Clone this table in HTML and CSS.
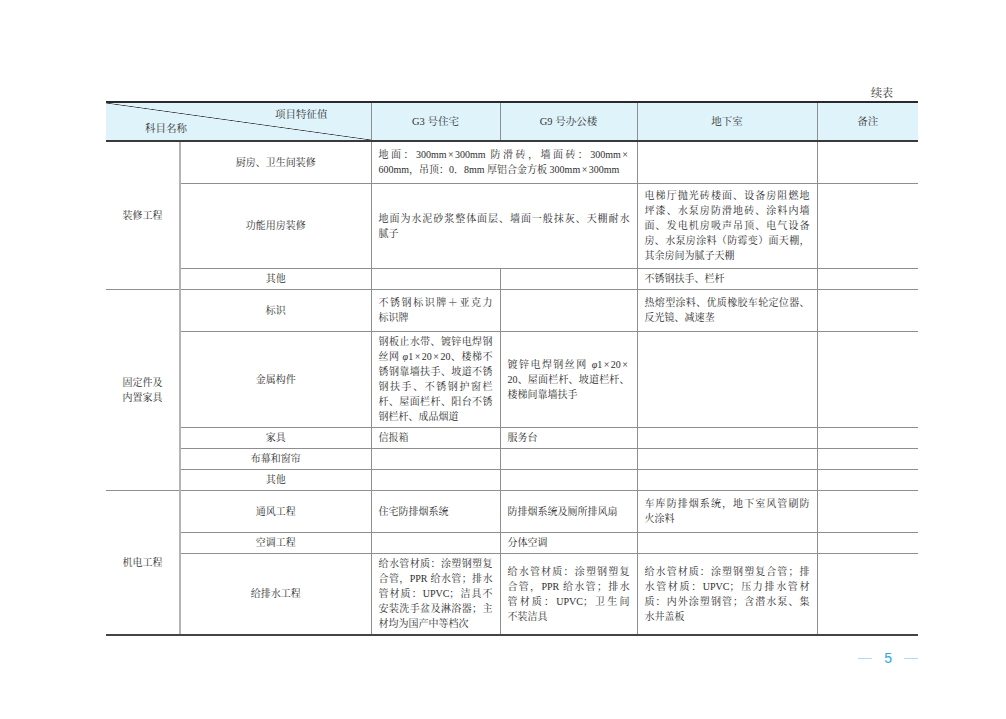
FILE: index.html
```html
<!DOCTYPE html>
<html lang="zh-CN">
<head>
<meta charset="utf-8">
<title>续表</title>
<link rel="stylesheet" href="styles.css">
</head>
<body>
<div class="page">
  <div class="caption">续表</div>
  <table class="sheet">
    <colgroup>
      <col class="w1"><col class="w2"><col class="w3"><col class="w4"><col class="w5"><col class="w6">
    </colgroup>
    <thead>
      <tr class="h-head">
        <th colspan="2" class="diag c1">
          <div class="diag-box">
            <span class="diag-top">项目特征值</span>
            <span class="diag-bottom">科目名称</span>
          </div>
        </th>
        <th>G3 号住宅</th>
        <th>G9 号办公楼</th>
        <th>地下室</th>
        <th class="c6">备注</th>
      </tr>
    </thead>
    <tbody>
      <tr class="h42">
        <td rowspan="3" class="c1 sec">装修工程</td>
        <td class="lbl">厨房、卫生间装修</td>
        <td colspan="2" class="txt"><span class="ln">地面：300mm<span class="x">×</span>300mm 防滑砖，墙面砖：300mm<span class="x">×</span></span><span class="ln last">600mm，吊顶：0．8mm 厚铝合金方板 300mm<span class="x">×</span>300mm</span></td>
        <td class="txt"></td>
        <td class="c6"></td>
      </tr>
      <tr class="h85">
        <td class="lbl">功能用房装修</td>
        <td colspan="2" class="txt"><span class="ln">地面为水泥砂浆整体面层、墙面一般抹灰、天棚耐水</span><span class="ln last">腻子</span></td>
        <td class="txt"><span class="ln">电梯厅抛光砖楼面、设备房阻燃地</span><span class="ln">坪漆、水泵房防滑地砖、涂料内墙</span><span class="ln">面、发电机房吸声吊顶、电气设备</span><span class="ln">房、水泵房涂料（防霉变）面天棚，</span><span class="ln last">其余房间为腻子天棚</span></td>
        <td class="c6"></td>
      </tr>
      <tr class="h21">
        <td class="lbl">其他</td>
        <td class="txt"></td>
        <td class="txt"></td>
        <td class="txt">不锈钢扶手、栏杆</td>
        <td class="c6"></td>
      </tr>

      <tr class="h42">
        <td rowspan="5" class="c1 sec"><span class="ln">固定件及</span><span class="ln">内置家具</span></td>
        <td class="lbl">标识</td>
        <td class="txt"><span class="ln">不锈钢标识牌＋亚克力</span><span class="ln last">标识牌</span></td>
        <td class="txt"></td>
        <td class="txt"><span class="ln">热熔型涂料、优质橡胶车轮定位器、</span><span class="ln last">反光镜、减速垄</span></td>
        <td class="c6"></td>
      </tr>
      <tr class="h96">
        <td class="lbl">金属构件</td>
        <td class="txt"><span class="ln">钢板止水带、镀锌电焊钢</span><span class="ln">丝网 <i>φ</i>1<span class="x">×</span>20<span class="x">×</span>20、楼梯不</span><span class="ln">锈钢靠墙扶手、坡道不锈</span><span class="ln">钢扶手、不锈钢护窗栏</span><span class="ln">杆、屋面栏杆、阳台不锈</span><span class="ln last">钢栏杆、成品烟道</span></td>
        <td class="txt"><span class="ln">镀锌电焊钢丝网 <i>φ</i>1<span class="x">×</span>20<span class="x">×</span></span><span class="ln">20、屋面栏杆、坡道栏杆、</span><span class="ln last">楼梯间靠墙扶手</span></td>
        <td class="txt"></td>
        <td class="c6"></td>
      </tr>
      <tr class="h21">
        <td class="lbl">家具</td>
        <td class="txt">信报箱</td>
        <td class="txt">服务台</td>
        <td class="txt"></td>
        <td class="c6"></td>
      </tr>
      <tr class="h21">
        <td class="lbl">布幕和窗帘</td>
        <td class="txt"></td>
        <td class="txt"></td>
        <td class="txt"></td>
        <td class="c6"></td>
      </tr>
      <tr class="h21">
        <td class="lbl">其他</td>
        <td class="txt"></td>
        <td class="txt"></td>
        <td class="txt"></td>
        <td class="c6"></td>
      </tr>

      <tr class="h42">
        <td rowspan="3" class="c1 sec sec-last">机电工程</td>
        <td class="lbl">通风工程</td>
        <td class="txt">住宅防排烟系统</td>
        <td class="txt">防排烟系统及厕所排风扇</td>
        <td class="txt"><span class="ln">车库防排烟系统，地下室风管刷防</span><span class="ln last">火涂料</span></td>
        <td class="c6"></td>
      </tr>
      <tr class="h21">
        <td class="lbl">空调工程</td>
        <td class="txt"></td>
        <td class="txt">分体空调</td>
        <td class="txt"></td>
        <td class="c6"></td>
      </tr>
      <tr class="h82 last-row">
        <td class="lbl">给排水工程</td>
        <td class="txt"><span class="ln">给水管材质：涂塑钢塑复</span><span class="ln">合管，PPR 给水管；排水</span><span class="ln">管材质：UPVC；洁具不</span><span class="ln">安装洗手盆及淋浴器；主</span><span class="ln last">材均为国产中等档次</span></td>
        <td class="txt"><span class="ln">给水管材质：涂塑钢塑复</span><span class="ln">合管，PPR 给水管；排水</span><span class="ln">管材质：UPVC；卫生间</span><span class="ln last">不装洁具</span></td>
        <td class="txt"><span class="ln">给水管材质：涂塑钢塑复合管；排</span><span class="ln">水管材质：UPVC；压力排水管材</span><span class="ln">质：内外涂塑钢管；含潜水泵、集</span><span class="ln last">水井盖板</span></td>
        <td class="c6"></td>
      </tr>
    </tbody>
  </table>
  <div class="folio">
    <span class="folio-rule"></span>
    <span class="folio-num">5</span>
    <span class="folio-rule"></span>
  </div>
</div>
</body>
</html>
```
FILE: styles.css
```css
html, body {
  margin: 0;
  padding: 0;
  background: #ffffff;
}

body {
  font-family: "Liberation Serif", "Noto Serif CJK SC", "Noto Sans CJK SC", serif;
  color: #2e2e2e;
  font-size: 10px;
}

.page {
  width: 812px;
  padding: 86px 0 0 106px;
}

.caption {
  text-align: right;
  padding-right: 25px;
  font-size: 11px;
  line-height: 15px;
  height: 15px;
  color: #333;
}

.sheet {
  width: 812px;
  border-collapse: collapse;
  table-layout: fixed;
}

.w1 { width: 74px; }
.w2 { width: 191px; }
.w3 { width: 129px; }
.w4 { width: 137px; }
.w5 { width: 180px; }
.w6 { width: 101px; }

.sheet th,
.sheet td {
  border: 1px solid #8e8e8e;
  padding: 0 7px;
  vertical-align: middle;
  line-height: 15px;
  font-weight: normal;
}

.sheet th {
  background: #dff3fb;
  border-top: 2px solid #2a2a2a;
  border-bottom: 2px solid #3a3a3a;
  text-align: center;
  font-size: 10.5px;
  color: #333;
}

.h-head { height: 39px; }
.h21 { height: 21px; }
.h42 { height: 42px; }
.h82 { height: 82px; }
.h85 { height: 85px; }
.h96 { height: 96px; }

.sheet .c1 { border-left: none; }
.sheet .c6 { border-right: none; }

.sheet td.sec {
  text-align: center;
  border-right: 2px solid #b4b4b4;
  padding: 0 4px;
}

.sheet td.lbl {
  text-align: center;
}

.sheet td.txt {
  text-align: left;
}

.ln {
  display: block;
  text-align: justify;
  text-align-last: justify;
}

.ln.last {
  text-align: left;
  text-align-last: auto;
}

.sec .ln {
  text-align: center;
  text-align-last: center;
}

.x {
  padding: 0 1.5px;
}

.sheet .last-row td,
.sheet td.sec-last {
  border-bottom: 2px solid #444;
}

.sheet th.diag {
  padding: 0;
  background:
    linear-gradient(to top right, transparent calc(50% - 0.7px), #3a3a3a 50%, transparent calc(50% + 0.7px)),
    #dff3fb;
}

.diag-box {
  display: flex;
  flex-direction: column;
  height: 37px;
  justify-content: center;
  line-height: 14px;
}

.diag-top {
  align-self: flex-end;
  margin-right: 43px;
}

.diag-bottom {
  align-self: flex-start;
  margin-left: 39px;
}

i {
  font-style: italic;
}

.folio {
  display: flex;
  justify-content: flex-end;
  align-items: center;
  gap: 12px;
  margin-top: 14px;
  height: 16px;
}

.folio-rule {
  width: 14px;
  height: 1px;
  background: #a9def5;
}

.folio-num {
  font-family: "Liberation Sans", "DejaVu Sans", sans-serif;
  font-size: 14px;
  line-height: 16px;
  color: #27a9e1;
}
```
